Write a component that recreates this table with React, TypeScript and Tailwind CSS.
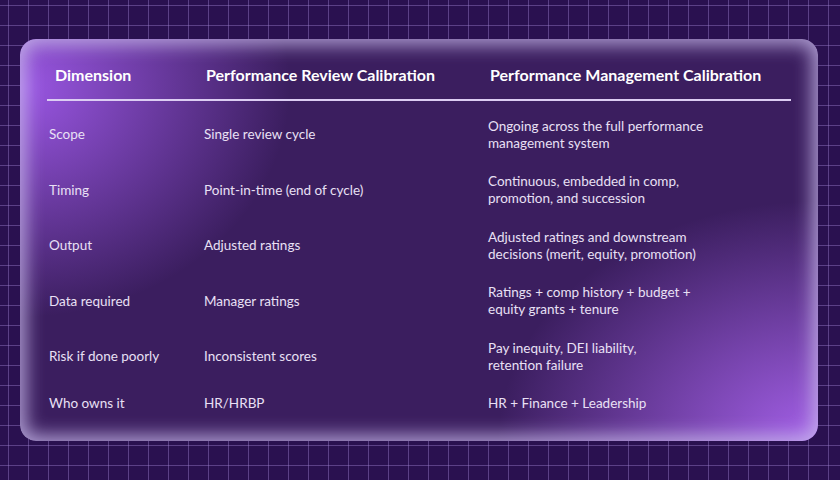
const rows: { label: string; review: string; management: string[] }[] = [
  { label: "Scope", review: "Single review cycle", management: ["Ongoing across the full performance", "management system"] },
  { label: "Timing", review: "Point-in-time (end of cycle)", management: ["Continuous, embedded in comp,", "promotion, and succession"] },
  { label: "Output", review: "Adjusted ratings", management: ["Adjusted ratings and downstream", "decisions (merit, equity, promotion)"] },
  { label: "Data required", review: "Manager ratings", management: ["Ratings + comp history + budget +", "equity grants + tenure"] },
  { label: "Risk if done poorly", review: "Inconsistent scores", management: ["Pay inequity, DEI liability,", "retention failure"] },
  { label: "Who owns it", review: "HR/HRBP", management: ["HR + Finance + Leadership"] },
];

export default function App() {
  return (
    <div
      className="w-[840px] h-[480px] overflow-hidden bg-[#2a1150] bg-[linear-gradient(to_right,rgba(160,130,210,0.42)_1px,transparent_1px),linear-gradient(to_bottom,rgba(160,130,210,0.42)_1px,transparent_1px)] bg-size-[20px_20px] bg-position-[8px_5px] pt-[39px] pl-[20px]"
      style={{ fontFamily: "Lato, 'Open Sans', sans-serif" }}
    >
      <div className="w-[798px] h-[402px] rounded-[16px] overflow-hidden bg-[#3b1e5f] bg-[radial-gradient(ellipse_270px_230px_at_0%_12%,rgba(160,90,235,0.95),rgba(160,90,235,0)_100%),radial-gradient(ellipse_320px_240px_at_100%_100%,rgba(170,100,240,0.95),rgba(170,100,240,0)_100%)] shadow-[inset_0_0_18px_6px_rgba(200,185,235,0.8)] px-[27px] pt-[16px]">
        <div className="grid grid-cols-[157px_284px_1fr] text-white font-bold text-[16px] leading-[20px] pt-[10px] pb-[14px] border-b-2 border-[#dccdf3]">
          <div className="pl-[8px]">Dimension</div>
          <div className="pl-[2px]">Performance Review Calibration</div>
          <div className="pl-[2px]">Performance Management Calibration</div>
        </div>
        <div className="pt-[6px]">
          {rows.map((r) => (
            <div key={r.label} className="grid grid-cols-[157px_284px_1fr] items-center py-[10.75px] text-[13.5px] leading-[17px] text-[#e9e0f5]">
              <div className="pl-[2px]">{r.label}</div>
              <div>{r.review}</div>
              <div>
                {r.management.map((m) => (
                  <div key={m}>{m}</div>
                ))}
              </div>
            </div>
          ))}
        </div>
      </div>
    </div>
  );
}
